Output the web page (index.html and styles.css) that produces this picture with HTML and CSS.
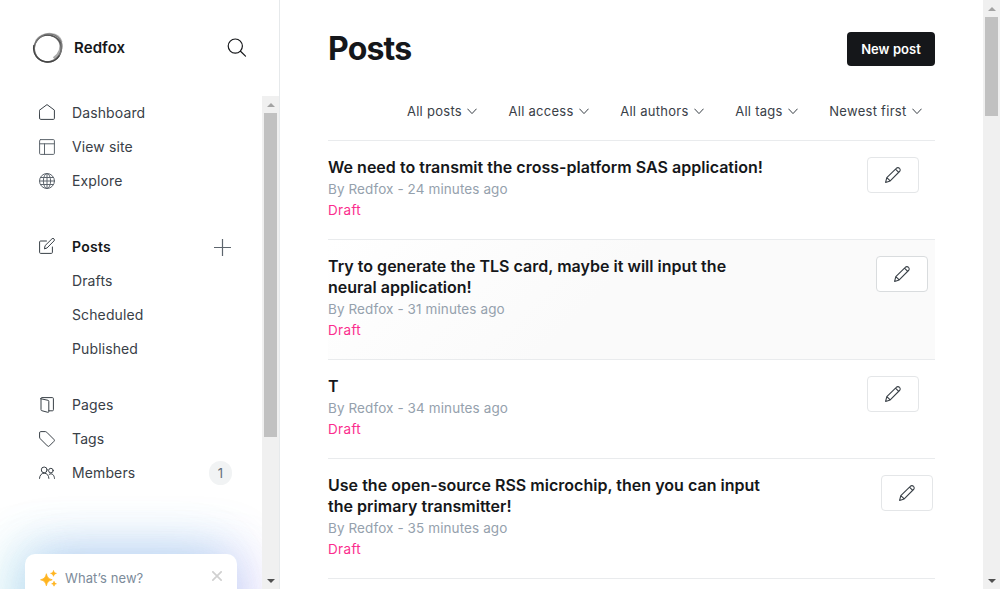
FILE: index.html
```
<!DOCTYPE html>
<html lang="en">
<head>
<meta charset="utf-8">
<title>Posts</title>
<link rel="stylesheet" href="styles.css">
</head>
<body>
<svg class="defs" width="0" height="0">
  <symbol id="chevron" viewBox="0 0 10 7"><path d="M.7 1l4.300 4.600L9.300 1" fill="none" stroke="currentColor" stroke-width="1" stroke-linecap="round" stroke-linejoin="round"/></symbol>
  <symbol id="pen" viewBox="0 0 16 16"><path d="M.6 15.400l1.200-4.700L11.300 1.300a2.200 2.200 0 0 1 3.200 0 2.200 2.200 0 0 1 0 3.200L5.200 13.900.6 15.400zM10.500 2.200l3.200 3.200M1.800 10.700l3.400 3.200" fill="none" stroke="currentColor" stroke-width="1.100" stroke-linecap="round" stroke-linejoin="round"/></symbol>
</svg>
<div class="app">
  <aside class="sidebar">
    <header class="brand">
      <svg class="logo" viewBox="0 0 32 32" fill="none">
        <path d="M4 9C8 3.500 13 1.600 19 2c5 .3 9 3 10.500 8" stroke="#b0b0b0" stroke-width="2.200"/>
        <path d="M28.300 9.500c2 6.500-.5 13-6.500 17" stroke="#aaa" stroke-width="3.200"/>
        <circle cx="15.700" cy="16.500" r="13.500" stroke="#666" stroke-width="1.600"/>
        <ellipse cx="16.200" cy="16" rx="14.400" ry="13.200" transform="rotate(-48 16 16)" stroke="#777" stroke-width="1"/>
        <path d="M2 13c-2 9 4 16.500 13 17 6 .2 10-2.500 12.500-6.500" stroke="#444" stroke-width="1.300"/>
        <path d="M12 3.500c6-1 14 1 16.500 7.500" stroke="#555" stroke-width="1.200"/>
      </svg>
      <span class="name">Redfox</span>
      <svg class="search" viewBox="0 0 20 20" fill="none" stroke="#15171a" stroke-width="1.200" stroke-linecap="round"><circle cx="8.300" cy="8.100" r="7.100"/><path d="M13.500 13.300l5 4.800"/></svg>
    </header>
    <div class="side-body">
      <nav class="nav">
        <ul class="group">
          <li class="item"><svg class="icon home" viewBox="0 0 16 16"><path d="M.6 6.100L8 .6l7.400 5.500v8.300a1 1 0 0 1-1 1H1.600a1 1 0 0 1-1-1z"/></svg><span>Dashboard</span></li>
          <li class="item"><svg class="icon soft" viewBox="0 0 16 16"><rect x=".6" y=".6" width="14.800" height="14.800" rx="1"/><path d="M.5 4.800h15M5.500 4.800v10.700"/></svg><span>View site</span></li>
          <li class="item"><svg class="icon soft" viewBox="0 0 16 16"><circle cx="8" cy="8" r="7.500"/><ellipse cx="8" cy="8" rx="3.600" ry="7.500"/><path d="M.5 8h15M1.600 4.500h12.800M1.600 11.500h12.800M8 .5v15"/></svg><span>Explore</span></li>
        </ul>
        <ul class="group posts">
          <li class="item active"><svg class="icon compose" viewBox="0 0 16 16"><path d="M7.500 3H1.600a1 1 0 0 0-1 1v10.400a1 1 0 0 0 1 1h10.800a1 1 0 0 0 1-1V9"/><path d="M5.500 10.500l.6-2.900L12.900.9a1.400 1.400 0 0 1 2.100 0 1.400 1.400 0 0 1 0 2L8.300 9.700z"/></svg><span>Posts</span><svg class="plus" viewBox="0 0 17 17"><path d="M8.500 0v17M0 8.500h17"/></svg></li>
          <li class="item sub"><span>Drafts</span></li>
          <li class="item sub"><span>Scheduled</span></li>
          <li class="item sub"><span>Published</span></li>
        </ul>
        <ul class="group pages">
          <li class="item"><svg class="icon" viewBox="0 0 16 16"><path d="M1.600 1.700l7.400 1.600a1 1 0 0 1 .8 1v10.200a.8.800 0 0 1-1 .8l-6-1.600a1 1 0 0 1-.8-1V1.400a.8.800 0 0 1 .8-.8h10.600a1 1 0 0 1 1 1v11.200a1 1 0 0 1-1 1H9.800"/></svg><span>Pages</span></li>
          <li class="item"><svg class="icon" viewBox="0 0 16 16"><path d="M.6 1.600a1 1 0 0 1 1-1h4.800a2 2 0 0 1 1.300.6l7.200 7.200a1.400 1.400 0 0 1 0 2l-4.500 4.500a1.400 1.400 0 0 1-2 0L1.200 7.700a2 2 0 0 1-.6-1.300z"/></svg><span>Tags</span></li>
          <li class="item"><svg class="icon" viewBox="0 0 16 16"><circle cx="5.200" cy="4.900" r="2.900"/><path d="M.5 13.400c.2-3.200 2-5.200 4.700-5.200s4.500 2 4.700 5.200"/><circle cx="11.900" cy="5.600" r="2.300"/><path d="M10.200 9.300c2.800-1.700 5.100.7 5.300 4.100"/></svg><span>Members</span><span class="count">1</span></li>
        </ul>
      </nav>
      <div class="whats-new">
        <svg class="sparkle" viewBox="0 0 16 16" fill="#ffb41f" stroke="#ffb41f" stroke-width=".7" stroke-linejoin="round"><path d="M6 3.500c.9 3.600 1.900 4.700 5.500 5.700-3.600 1-4.600 2.100-5.500 5.700-.9-3.600-1.900-4.700-5.500-5.700 3.600-1 4.600-2.100 5.500-5.700zM12.700.5c.5 1.800.9 2.200 2.700 2.700-1.800.5-2.200.9-2.700 2.700-.5-1.800-.9-2.200-2.700-2.700 1.800-.5 2.200-.9 2.700-2.700zM13.200 10.700c.4 1.500.8 1.800 2.200 2.200-1.400.4-1.800.8-2.200 2.300-.4-1.500-.8-1.900-2.200-2.300 1.400-.4 1.800-.7 2.200-2.200z"/></svg>
        <span>What’s new?</span>
        <svg class="close" viewBox="0 0 10 10" stroke="#d0d0d0" stroke-width="1.700"><path d="M.3.3l9.400 9.400M9.700.3L.3 9.700"/></svg>
      </div>
      <div class="scrollbar side-scroll">
        <i class="arrow up"></i><i class="thumb"></i><i class="arrow down"></i>
      </div>
    </div>
  </aside>
  <main class="main">
    <header class="head"><h1>Posts</h1><button class="new">New post</button></header>
    <div class="filters">
      <span class="filter">All posts<svg><use href="#chevron"/></svg></span>
      <span class="filter">All access<svg><use href="#chevron"/></svg></span>
      <span class="filter">All authors<svg><use href="#chevron"/></svg></span>
      <span class="filter">All tags<svg><use href="#chevron"/></svg></span>
      <span class="filter">Newest first<svg><use href="#chevron"/></svg></span>
    </div>
    <section class="list">
      <article class="post">
        <div class="text"><h3>We need to transmit the cross-platform SAS application!</h3><p>By Redfox - 24 minutes ago</p><p class="draft">Draft</p></div>
        <a class="edit e16"><svg><use href="#pen"/></svg></a>
      </article>
      <article class="post tall hover">
        <div class="text"><h3>Try to generate the TLS card, maybe it will input the<br>neural application!</h3><p>By Redfox - 31 minutes ago</p><p class="draft">Draft</p></div>
        <a class="edit e7"><svg><use href="#pen"/></svg></a>
      </article>
      <article class="post">
        <div class="text"><h3>T</h3><p>By Redfox - 34 minutes ago</p><p class="draft">Draft</p></div>
        <a class="edit e16"><svg><use href="#pen"/></svg></a>
      </article>
      <article class="post tall">
        <div class="text"><h3>Use the open-source RSS microchip, then you can input<br>the primary transmitter!</h3><p>By Redfox - 35 minutes ago</p><p class="draft">Draft</p></div>
        <a class="edit e2"><svg><use href="#pen"/></svg></a>
      </article>
      <article class="post"></article>
    </section>
  </main>
  <div class="scrollbar main-scroll">
    <i class="arrow up"></i><i class="thumb"></i><i class="arrow down"></i>
  </div>
</div>
</body>
</html>
```
FILE: styles.css
```
* { box-sizing: border-box; }
html, body { height: 100%; }
body { margin: 0; overflow: hidden; background: #fff; color: #15171a; font-family: Inter, "Liberation Sans", sans-serif; }
h1, h3, p, ul { margin: 0; padding: 0; }
.defs { position: absolute; }
.app { display: flex; height: 100vh; }

.sidebar { width: 280px; flex: none; display: flex; flex-direction: column; border-right: 1px solid #e6e9eb; }
.brand { height: 96px; flex: none; display: flex; align-items: center; padding: 0 32px; }
.logo { width: 32px; height: 32px; }
.name { margin-left: 10px; padding-bottom: 2px; font-size: 15px; font-weight: 600; letter-spacing: .1px; }
.search { width: 20px; height: 20px; margin-left: auto; }
.side-body { flex: 1; min-height: 0; position: relative; overflow: hidden; padding-right: 17px; }
.group { list-style: none; }
.posts { margin-top: 32px; }
.pages { margin-top: 22px; }
.item { height: 34px; display: flex; align-items: center; padding: 0 30px 0 39px; font-size: 14px; letter-spacing: .12px; color: #394047; }
.item span { line-height: 20px; }
.item.active { font-weight: 600; color: #15171a; letter-spacing: .25px; }
.item.sub { padding-left: 72px; }
.icon { width: 16px; height: 16px; margin-right: 17px; fill: none; stroke: #394047; stroke-width: 1; stroke-linecap: round; stroke-linejoin: round; }
.icon.soft { stroke: #5d656d; }
.icon.home, .icon.compose { margin-bottom: 2px; }
.plus { width: 17px; height: 17px; margin: 0 1px 0 auto; stroke: #5d656d; stroke-width: 1.200; }
.count { width: 23px; height: 24px; margin-left: auto; border-radius: 12px; background: #f1f3f4; color: #626d79; text-align: center; font-size: 13px; }
.item .count { line-height: 24px; }
.whats-new { position: absolute; left: 25px; top: 458px; width: 212px; height: 120px; padding: 14px 14px 0 16px; display: flex; align-items: flex-start; border-radius: 10px; background: #fff; color: #7c8b9a; font-size: 13px; line-height: 21px; letter-spacing: .1px; box-shadow: 0 -6px 50px rgba(70,140,225,.28), -20px 0 56px rgba(60,210,205,.18), 20px 4px 50px rgba(200,120,250,.17); clip-path: inset(-100px -25px 0 -25px); }
.sparkle { width: 17px; height: 17px; margin: 2px 8px 0 -1px; }
.close { width: 10px; height: 10px; margin: 3px 1px 0 auto; }

.scrollbar { width: 17px; background: #f0f0f0; display: flex; flex-direction: column; align-items: center; }
.side-scroll { position: absolute; top: 0; right: 0; bottom: 0; }
.thumb { width: 13px; background: #c1c1c1; }
.side-scroll .thumb { height: 324px; }
.main-scroll .thumb { height: 99px; }
.arrow { width: 17px; height: 17px; display: flex; align-items: center; justify-content: center; }
.arrow::before { content: ""; border: 4px solid transparent; border-top-width: 0; border-bottom-color: #a3a3a3; }
.arrow.down { margin-top: auto; }
.arrow.down::before { border-top: 4px solid #505050; border-bottom-width: 0; }
.main-scroll { flex: none; }

.main { flex: 1; padding: 0 48px; overflow: hidden; }
.head { height: 98px; display: flex; align-items: center; justify-content: space-between; }
h1 { font-size: 32px; font-weight: 700; line-height: 40px; letter-spacing: -.8px; }
.new { width: 88px; height: 34px; border: 0; border-radius: 4px; padding: 0; background: #15171a; color: #fff; font: 600 13px Inter, sans-serif; letter-spacing: .05px; }
.filters { height: 42px; display: flex; justify-content: flex-end; gap: 31px; padding: 3px 13px 0 0; }
.filter { display: flex; align-items: center; height: 20px; font-size: 13px; font-weight: 400; letter-spacing: .28px; color: #394047; }
.filter svg { width: 10px; height: 7px; margin-left: 5.500px; color: #394047; }

.post { height: 99px; display: flex; justify-content: space-between; padding-top: 16px; border-top: 1px solid #e9ebed; }
.post.tall { height: 120px; }
.hover { background: linear-gradient(135deg, #fff 0, #fafafa 45%); }
.text { font-size: 13.500px; }
h3 { margin-bottom: 1px; font-size: 16px; font-weight: 600; line-height: 21px; letter-spacing: .02px; }
p { line-height: 21px; letter-spacing: .1px; color: #95a1ad; }
.draft { letter-spacing: .35px; color: #fb2d8d; }
.edit { width: 52px; height: 36px; flex: none; display: flex; align-items: center; justify-content: center; border: 1px solid #e4e6e8; border-radius: 4px; background: #fff; color: #394047; }
.edit svg { width: 16px; height: 16px; }
.hover .edit { border-color: #d9dcde; }
.e16 { margin-right: 16px; }
.e7 { margin-right: 7px; }
.e2 { margin-right: 2px; }
```
